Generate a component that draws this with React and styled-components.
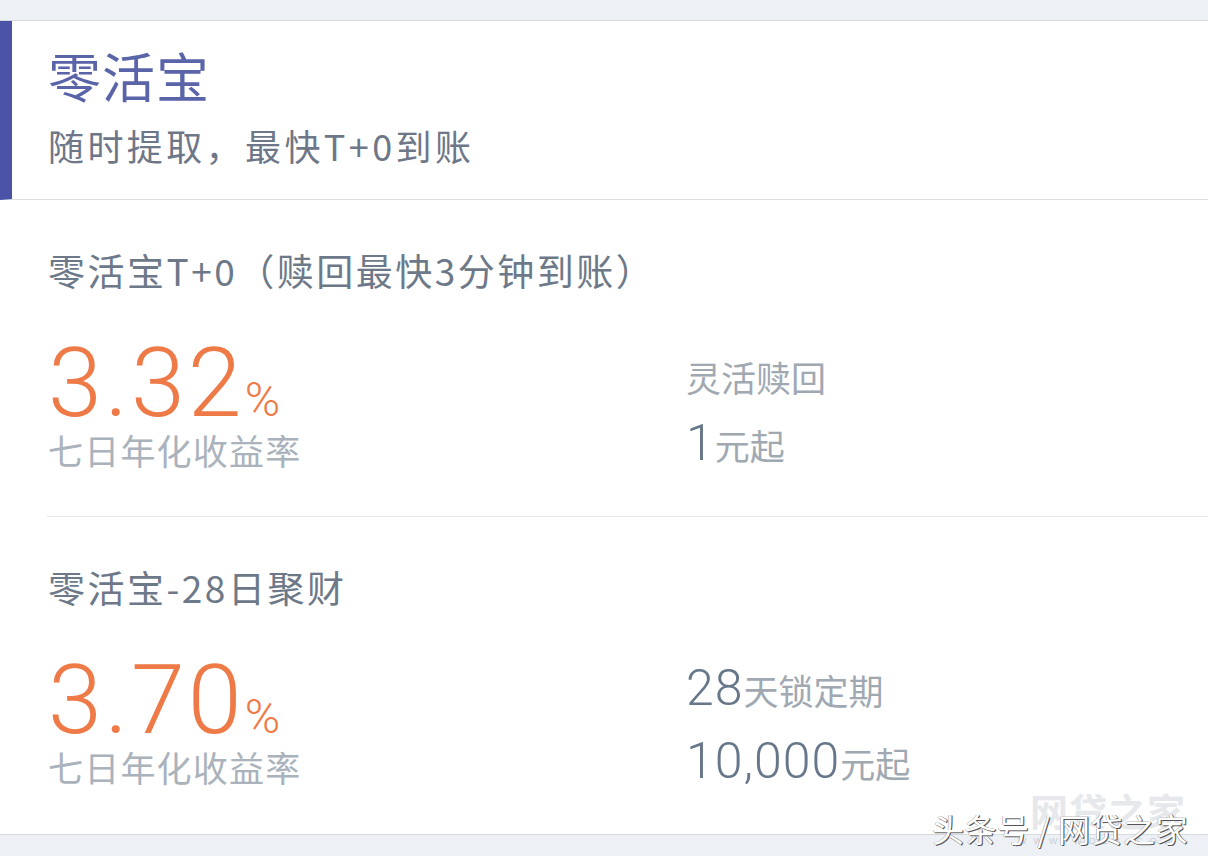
import React from 'react'
import styled, { createGlobalStyle } from 'styled-components'

const GlobalStyle = createGlobalStyle`
  html, body {
    margin: 0;
    padding: 0;
    background: #fff;
  }
  body {
    font-family: "Noto Sans CJK SC", "Noto Sans", sans-serif;
  }
`

const Page = styled.div`
  position: relative;
  width: 1208px;
  height: 856px;
  overflow: hidden;
  background: #fff;
  display: flex;
  flex-direction: column;
`

const TopBand = styled.div`
  height: 20px;
  flex: none;
  background: #edf1f5;
  border-bottom: 1px solid #d3d8dd;
`

const Header = styled.header`
  height: 179px;
  flex: none;
  box-sizing: border-box;
  border-left: 12px solid #4b53a7;
  border-bottom: 1px solid #dcdee1;
  padding: 24px 0 0 36px;
`

const Title = styled.h1`
  margin: 0;
  font-size: 53px;
  line-height: 60px;
  font-weight: 400;
  letter-spacing: 1px;
  color: #5a64a9;
`

const Subtitle = styled.p`
  margin: 18px 0 0;
  font-size: 36px;
  line-height: 44px;
  letter-spacing: 3.4px;
  color: #6e7787;
`

const Section = styled.section`
  height: 317px;
  flex: none;
  box-sizing: border-box;
  margin-left: 47px;
  padding: 46px 0 0 1px;
  border-bottom: ${p => (p.$last ? 'none' : '1px solid #e4e4e4')};
`

const ProductName = styled.h2`
  margin: 0;
  font-size: 37px;
  line-height: 48px;
  font-weight: 400;
  letter-spacing: 2.5px;
  color: #6d7989;
`

const RateRow = styled.div`
  display: grid;
  grid-template-columns: 638px 1fr;
  margin-top: 49px;
`

const Rate = styled.div`
  font-family: Roboto, "Open Sans", sans-serif;
  font-weight: 300;
  font-size: 97px;
  line-height: 80px;
  letter-spacing: 3px;
  color: #ee7a48;
`

const Percent = styled.span`
  font-size: 48px;
  line-height: 1;
  letter-spacing: 0;
`

const RateLabel = styled.div`
  margin-top: 6px;
  font-size: 35px;
  line-height: 40px;
  letter-spacing: 1.2px;
  color: #aab2bc;
`

const Details = styled.div`
  padding-top: 14px;
`

const DetailLine = styled.div`
  font-size: 35px;
  line-height: 40px;
  margin-top: ${p => p.$gap || 0}px;
  color: #a0a8b2;
  white-space: nowrap;
`

const Num = styled.span`
  font-family: Roboto, "Open Sans", sans-serif;
  font-weight: 300;
  font-size: 50px;
  line-height: 1;
  letter-spacing: 1px;
  color: #66778a;
`

const BottomBand = styled.div`
  flex: 1;
  background: #edf1f5;
  border-top: 1px solid #d6dbe0;
`

const Watermark = styled.div`
  position: absolute;
  right: 20px;
  bottom: 2px;
  width: 260px;
  height: 66px;
`

const Logo = styled.div`
  position: absolute;
  right: 2px;
  top: 2px;
  font-size: 38px;
  line-height: 40px;
  font-weight: 700;
  letter-spacing: 1px;
  color: #e6e8eb;
`

const LogoUrl = styled.div`
  position: absolute;
  right: 10px;
  top: 48px;
  font-family: "Liberation Sans", sans-serif;
  font-size: 9px;
  letter-spacing: 7px;
  color: #c9ced4;
`

const Credit = styled.div`
  position: absolute;
  right: 0;
  top: 20px;
  font-size: 32px;
  line-height: 40px;
  letter-spacing: 0.5px;
  color: #fff;
  white-space: nowrap;
  text-shadow: 1px 1px 0 #555, -0.5px -0.5px 0 #999, 1px 0 0 #777;
`

const products = [
  {
    name: '零活宝T+0（赎回最快3分钟到账）',
    rate: '3.32',
    lines: [
      { text: '灵活赎回' },
      { num: '1', text: '元起', gap: 21 }
    ]
  },
  {
    name: '零活宝-28日聚财',
    rate: '3.70',
    lines: [
      { num: '28', text: '天锁定期', gap: -11 },
      { num: '10,000', text: '元起', gap: 23 }
    ]
  }
]

const App = () => {
  return (
    <Page>
      <GlobalStyle />
      <TopBand />
      <Header>
        <Title>零活宝</Title>
        <Subtitle>随时提取，最快T+0到账</Subtitle>
      </Header>
      {products.map((p, i) => (
        <Section key={p.name} $last={i === products.length - 1}>
          <ProductName>{p.name}</ProductName>
          <RateRow>
            <div>
              <Rate>
                {p.rate}
                <Percent>%</Percent>
              </Rate>
              <RateLabel>七日年化收益率</RateLabel>
            </div>
            <Details>
              {p.lines.map((l, j) => (
                <DetailLine key={j} $gap={l.gap}>
                  {l.num && <Num>{l.num}</Num>}
                  {l.text}
                </DetailLine>
              ))}
            </Details>
          </RateRow>
        </Section>
      ))}
      <BottomBand />
      <Watermark>
        <Logo>网贷之家</Logo>
        <LogoUrl>WWW.WDZJ.COM</LogoUrl>
        <Credit>头条号 / 网贷之家</Credit>
      </Watermark>
    </Page>
  )
}

export default App
